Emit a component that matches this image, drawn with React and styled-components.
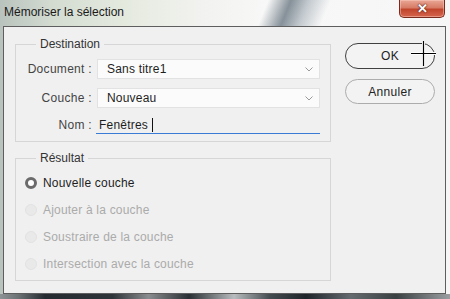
import React from "react";
import styled, { createGlobalStyle } from "styled-components";

const Global = createGlobalStyle`
  html, body {
    margin: 0;
    padding: 0;
    background: #ececec;
  }
  * {
    box-sizing: border-box;
  }
`;

const Window = styled.div`
  position: relative;
  width: 450px;
  height: 299px;
  display: flex;
  flex-direction: column;
  overflow: hidden;
  font-family: "Liberation Sans", Arial, sans-serif;
  background:
    linear-gradient(112deg, transparent 0 47%, rgba(40, 60, 75, 0.55) 51%, rgba(90, 110, 125, 0.35) 54%, transparent 58%),
    linear-gradient(90deg, #b9c3bd 0%, #d4dcd2 12%, #e5eadf 28%, #f2f2f0 45%, #f8f8f8 60%, #f6f6f6 100%);
`;

const TitleBar = styled.div`
  height: 26px;
  display: flex;
  align-items: flex-start;
  justify-content: space-between;
  padding-left: 4px;
`;

const Title = styled.div`
  font-size: 12px;
  line-height: 16px;
  margin-top: 4px;
  color: #1a1a1a;
`;

const CloseButton = styled.div`
  width: 46px;
  height: 18px;
  margin-right: 5px;
  border: 1px solid #7b2b1e;
  border-top: none;
  border-radius: 0 0 5px 5px;
  background: linear-gradient(#e9a796 0%, #d77c66 45%, #c1452d 55%, #d5654e 100%);
  box-shadow: inset 0 0 0 1px rgba(255, 210, 200, 0.45);
  display: flex;
  align-items: center;
  justify-content: center;
  color: #fff;
  font-size: 13px;
  font-weight: bold;
  text-shadow: 0 0 2px #5a1a10, 0 0 1px #5a1a10;
`;

const Content = styled.div`
  margin: 0 4px 0 3px;
  height: 268px;
  border: 1px solid #5e5e5e;
  background: #f0f0f0;
  display: flex;
  padding-left: 11px;
`;

const LeftColumn = styled.div`
  width: 316px;
  display: flex;
  flex-direction: column;
`;

const Group = styled.fieldset`
  margin: ${(p) => p.$top}px 0 0 0;
  padding: ${(p) => p.$pad};
  border: 1px solid #d6d6d6;
  min-width: 0;
  display: flex;
  flex-direction: column;
`;

const Legend = styled.legend`
  margin-left: 20px;
  padding: 0 4px;
  font-size: 12px;
  line-height: 16px;
  color: #333;
`;

const FieldRow = styled.div`
  display: flex;
  align-items: center;
  height: ${(p) => p.$h}px;
  margin-top: ${(p) => p.$gap || 0}px;
`;

const Label = styled.div`
  width: 76px;
  text-align: right;
  font-size: 12px;
  color: #444;
  letter-spacing: 0.3px;
  margin-right: ${(p) => p.$mr || 5}px;
`;

const Select = styled.div`
  width: 223px;
  height: 20px;
  background: #fbfbfb;
  border: 1px solid #e2e2e2;
  display: flex;
  align-items: center;
  justify-content: space-between;
  padding: 0 6px 0 9px;
  font-size: 12px;
  color: #1e1e1e;
  letter-spacing: 0.2px;
`;

const Chevron = styled.svg`
  width: 8px;
  height: 5px;
`;

const TextInput = styled.div`
  width: 224px;
  height: 18px;
  border-bottom: 1px solid #3a7bd5;
  display: flex;
  align-items: center;
  padding-left: 3px;
  font-size: 12px;
  color: #1e1e1e;
  letter-spacing: 0.2px;
`;

const Caret = styled.span`
  display: inline-block;
  width: 1px;
  height: 14px;
  background: #111;
  margin-left: 4px;
`;

const RadioRow = styled.div`
  display: flex;
  align-items: center;
  height: 27px;
  padding-left: 9px;
  font-size: 12px;
  letter-spacing: 0.2px;
  color: ${(p) => (p.$disabled ? "#ababab" : "#1e1e1e")};
`;

const RadioDot = styled.span`
  width: 12px;
  height: 12px;
  border-radius: 50%;
  margin-right: 6px;
  background: ${(p) => (p.$checked ? "#fff" : "#e9e9e9")};
  border: ${(p) => (p.$checked ? "3.5px solid #6b6b6b" : "1px solid #e2e2e2")};
`;

const RightColumn = styled.div`
  margin: 16px 0 0 14px;
  display: flex;
  flex-direction: column;
  gap: 10px;
`;

const Button = styled.div`
  width: 90px;
  height: ${(p) => p.$h}px;
  border-radius: 13px;
  border: 1px solid ${(p) => (p.$primary ? "#404040" : "#acacac")};
  background: #f3f3f3;
  display: flex;
  align-items: center;
  justify-content: center;
  font-size: 12px;
  color: #222;
  letter-spacing: 0.3px;
`;

const Cursor = styled.svg`
  position: absolute;
  left: 411px;
  top: 41px;
  width: 25px;
  height: 25px;
  pointer-events: none;
`;

const BottomStrip = styled.div`
  flex: 1;
  background: linear-gradient(90deg, #8d9294 0%, #6d7275 4%, #262b30 10%, #2f3438 25%, #8a8d8f 33%, #2a2f33 42%, #b8bcbe 52%, #454c50 60%, #1e2428 68%, #656b6e 78%, #3a3f42 88%, #9b9fa1 100%);
`;

function Arrow() {
  return (
    <Chevron viewBox="0 0 8 5">
      <path d="M0.5 0.5 L4 4 L7.5 0.5" fill="none" stroke="#9a9a9a" strokeWidth="1" />
    </Chevron>
  );
}

const results = [
  { label: "Nouvelle couche", checked: true },
  { label: "Ajouter à la couche" },
  { label: "Soustraire de la couche" },
  { label: "Intersection avec la couche" },
];

export default function App() {
  return (
    <Window>
      <Global />
      <TitleBar>
        <Title>Mémoriser la sélection</Title>
        <CloseButton>✕</CloseButton>
      </TitleBar>
      <Content>
        <LeftColumn>
          <Group $top={9} $pad="7px 0 7px 0">
            <Legend>Destination</Legend>
            <FieldRow $h={20}>
              <Label>Document :</Label>
              <Select>
                Sans titre1
                <Arrow />
              </Select>
            </FieldRow>
            <FieldRow $h={20} $gap={9}>
              <Label>Couche :</Label>
              <Select>
                Nouveau
                <Arrow />
              </Select>
            </FieldRow>
            <FieldRow $h={18} $gap={8}>
              <Label $mr={4}>Nom :</Label>
              <TextInput>
                Fenêtres
                <Caret />
              </TextInput>
            </FieldRow>
          </Group>
          <Group $top={8} $pad="3px 0 3px 0">
            <Legend>Résultat</Legend>
            {results.map((r) => (
              <RadioRow key={r.label} $disabled={!r.checked}>
                <RadioDot $checked={r.checked} />
                {r.label}
              </RadioRow>
            ))}
          </Group>
        </LeftColumn>
        <RightColumn>
          <Button $primary $h={26}>OK</Button>
          <Button $h={25}>Annuler</Button>
        </RightColumn>
      </Content>
      <BottomStrip />
      <Cursor viewBox="0 0 25 25">
        <path d="M12.5 0 V25 M0 12.5 H25" stroke="#fff" strokeWidth="3" />
        <path d="M12.5 0 V25 M0 12.5 H25" stroke="#000" strokeWidth="1.2" />
      </Cursor>
    </Window>
  );
}
